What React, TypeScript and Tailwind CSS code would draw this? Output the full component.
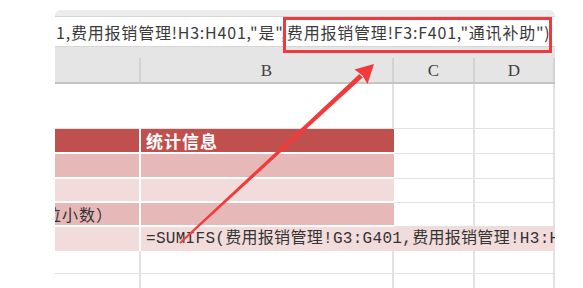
const serif = { fontFamily: '"Liberation Serif", "Noto Sans CJK SC", serif' };
const mono = { fontFamily: '"Liberation Mono", "Noto Sans CJK SC", monospace' };
const sans = { fontFamily: '"Noto Sans CJK SC", "Noto Sans", sans-serif' };

function Row({ h, a, b, rest, aText, bText }: {
  h: string;
  a: string;
  b: string;
  rest?: boolean;
  aText?: React.ReactNode;
  bText?: React.ReactNode;
}) {
  return (
    <div className={`flex ${h}`}>
      <div className={`w-[86px] shrink-0 overflow-hidden flex items-center ${a}`}>{aText}</div>
      <div className={`w-[253px] shrink-0 flex items-center ${b}`}>{bText}</div>
      {rest !== false && (
        <>
          <div className="w-[81px] shrink-0 border-r-2 border-b border-[#e2e2e2]" />
          <div className="w-[80px] shrink-0 border-r-2 border-b border-[#e2e2e2]" />
        </>
      )}
    </div>
  );
}

export default function App() {
  const fill = "border-b-2 border-white";
  return (
    <div className="relative w-[583px] h-[288px] overflow-hidden bg-white">
      <div className="ml-[55px] mt-[10px] w-[500px] overflow-hidden rounded-t-[6px] bg-[#ececec]">
        <div className="h-[6px]" />
        {/* formula bar */}
        <div
          className="h-[31px] bg-white border-y border-[#d6d6d6] flex items-center pl-[1px] text-[16px] tracking-[0.8px] text-[#3a3a3a] whitespace-nowrap overflow-hidden"
          style={sans}
        >
          1,费用报销管理!H3:H401,"是",费用报销管理!F3:F401,"通讯补助")
        </div>

        {/* column headers */}
        <div className="bg-[#e5e5e5]">
          <div className="h-[11px]" />
          <div className="flex h-[26px] border-b-2 border-[#c4c4c4] text-[17px] text-[#404040]" style={serif}>
            <div className="w-[86px] border-r-2 border-[#d2d2d2]" />
            <div className="w-[253px] border-r-2 border-[#d2d2d2] flex justify-center items-center pt-[1px]">B</div>
            <div className="w-[81px] border-r-2 border-[#d2d2d2] flex justify-center items-center pt-[1px]">C</div>
            <div className="w-[80px] border-r-2 border-[#d2d2d2] flex justify-center items-center pt-[1px]">D</div>
          </div>
        </div>

        {/* sheet body */}
        <div className="bg-white text-[#333]" style={serif}>
          <div className="flex h-[45px]">
            <div className="w-[339px] shrink-0 border-r-2 border-b border-[#e2e2e2]" />
            <div className="w-[81px] shrink-0 border-r-2 border-b border-[#e2e2e2]" />
            <div className="w-[80px] shrink-0 border-r-2 border-b border-[#e2e2e2]" />
          </div>
          <Row
            h="h-[25px]"
            a={`bg-[#c0504d] border-r-2 ${fill}`}
            b={`bg-[#c0504d] border-b-2 border-b-white`}
            bText={
              <span className="pl-[5px] text-[17px] font-bold text-white tracking-[1px]" style={sans}>
                统计信息
              </span>
            }
          />
          <Row h="h-[25px]" a={`bg-[#e6b8b7] border-r-2 ${fill}`} b="bg-[#e6b8b7] border-b-2 border-b-white" />
          <Row h="h-[24px]" a={`bg-[#f2dcdb] border-r-2 ${fill}`} b="bg-[#f2dcdb] border-b-2 border-b-white" />
          <Row
            h="h-[24px]"
            a={`bg-[#e6b8b7] border-r-2 ${fill}`}
            b="bg-[#e6b8b7] border-b-2 border-b-white"
            aText={
              <span className="ml-[-10px] text-[16px] whitespace-nowrap tracking-[1px]" style={sans}>
                位小数）
              </span>
            }
          />
          <div className="flex h-[24px] bg-[#f2dcdb]">
            <div className="w-[86px] shrink-0 border-r-2 border-white" />
            <div className="w-[414px] overflow-hidden flex items-center whitespace-nowrap pl-[5px] text-[16px] tracking-[0.3px] text-[#333]" style={mono}>
              =SUMIFS(费用报销管理!G3:G401,费用报销管理!H3:H401,"是",费用报销管理!F3:F401,"通讯补助")
            </div>
          </div>
          <Row h="h-[23px]" a="border-r-2 border-b border-[#e2e2e2]" b="border-r-2 border-b border-[#e2e2e2]" />
          <Row h="h-[24px]" a="border-r-2 border-b border-[#e2e2e2]" b="border-r-2 border-b border-[#e2e2e2]" />
        </div>
      </div>

      {/* red highlight box */}
      <div className="absolute left-[283px] top-[17px] w-[269px] h-[36px] border-[3px] border-[#ee3a3e]" />

      {/* arrow */}
      <svg className="absolute inset-0 pointer-events-none" width="583" height="288">
        <polygon points="180.6,243.8 179.4,242.2 359.3,73.9 362.7,77.6" fill="#f23a3a" />
        <polygon points="374,64 354.5,69.5 362.5,75.5 367.5,84" fill="#f23a3a" />
      </svg>
    </div>
  );
}
